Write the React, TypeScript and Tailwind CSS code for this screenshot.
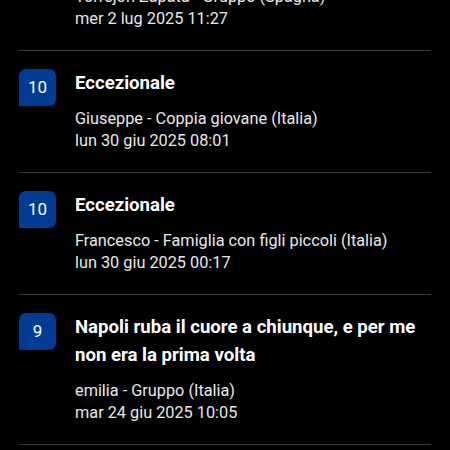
interface Review {
  score: number
  title: string
  author: string
  date: string
}

const reviews: Review[] = [
  {
    score: 10,
    title: 'Eccezionale',
    author: 'Torrejon Zapata - Gruppo (Spagna)',
    date: 'mer 2 lug 2025 11:27',
  },
  {
    score: 10,
    title: 'Eccezionale',
    author: 'Giuseppe - Coppia giovane (Italia)',
    date: 'lun 30 giu 2025 08:01',
  },
  {
    score: 10,
    title: 'Eccezionale',
    author: 'Francesco - Famiglia con figli piccoli (Italia)',
    date: 'lun 30 giu 2025 00:17',
  },
  {
    score: 9,
    title: 'Napoli ruba il cuore a chiunque, e per me non era la prima volta',
    author: 'emilia - Gruppo (Italia)',
    date: 'mar 24 giu 2025 10:05',
  },
  {
    score: 10,
    title: 'Eccezionale',
    author: 'Marco - Coppia (Italia)',
    date: 'dom 22 giu 2025 19:40',
  },
]

function ScoreBadge({ score }: { score: number }) {
  return (
    <div className="flex h-[37px] w-[37px] shrink-0 items-center justify-center rounded-[7px] rounded-bl-none bg-[#003b95] text-[17px] text-white">
      {score}
    </div>
  )
}

export default function App() {
  return (
    <div
      className="h-[450px] w-[450px] overflow-hidden bg-black"
      style={{ fontFamily: 'Roboto, "Noto Sans", sans-serif' }}
    >
      {/* list scrolled so the first review is partly hidden */}
      <div className="-mt-[71px] px-[19px]">
        {reviews.map((review, i) => (
          <div key={i} className="flex gap-[19px] border-b border-[#3a3a3a] pt-[18px] pb-5">
            <ScoreBadge score={review.score} />
            <div className="min-w-0 flex-1">
              <h3 className="text-[18.6px] font-bold leading-[28px] text-white">{review.title}</h3>
              <div className="mt-[11px] text-[16.3px] leading-[22px] text-[#e8e8e8]">
                <p>{review.author}</p>
                <p>{review.date}</p>
              </div>
            </div>
          </div>
        ))}
      </div>
    </div>
  )
}
